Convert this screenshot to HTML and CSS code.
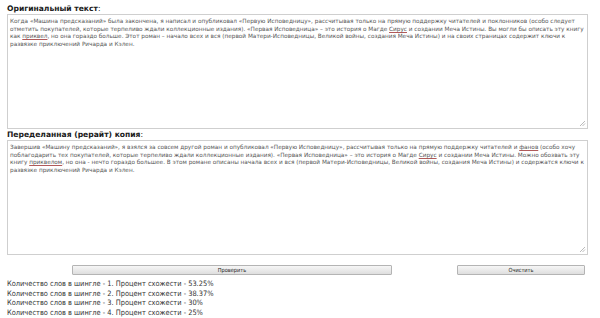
FILE: index.html
```html
<!DOCTYPE html>
<html lang="ru">
<head>
<meta charset="utf-8">
<link rel="stylesheet" href="styles.css">
</head>
<body>
<div class="page">
  <div class="label">Оригинальный текст<span class="colon">:</span></div>
  <div class="box box-orig">
    <div class="line">Когда «Машина предсказаний» была закончена, я написал и опубликовал «Первую Исповедницу», рассчитывая только на прямую поддержку читателей и поклонников (особо следует</div>
    <div class="line">отметить покупателей, которые терпеливо ждали коллекционные издания). «Первая Исповедница» – это история о Магде <span class="sp">Сирус</span> и создании Меча Истины. Вы могли бы описать эту книгу</div>
    <div class="line">как <span class="sp">приквел</span>, но она гораздо больше. Этот роман – начало всех и вся (первой Матери-Исповедницы, Великой войны, создания Меча Истины) и на своих страницах содержит ключи к</div>
    <div class="line">развязке приключений Ричарда и Кэлен.</div>
    <svg class="grip" width="7" height="7" viewBox="0 0 7 7"><path d="M6 1L1 6M6 3.5L3.5 6" stroke="#aaa" stroke-width="0.8"/></svg>
  </div>
  <div class="label label2">Переделанная (рерайт) копия<span class="colon">:</span></div>
  <div class="box box-copy">
    <div class="line">Завершив «Машину предсказаний», я взялся за совсем другой роман и опубликовал «Первую Исповедницу», рассчитывая только на прямую поддержку читателей и <span class="sp">фанов</span> (особо хочу</div>
    <div class="line">поблагодарить тех покупателей, которые терпеливо ждали коллекционные издания). «Первая Исповедница» – это история о Магде <span class="sp">Сирус</span> и создании Меча Истины. Можно обозвать эту</div>
    <div class="line">книгу <span class="sp">приквелом</span>, но она - нечто гораздо большее. В этом романе описаны начала всех и вся (первой Матери-Исповедницы, Великой войны, создания Меча Истины) и содержатся ключи к</div>
    <div class="line">развязке приключений Ричарда и Кэлен.</div>
    <svg class="grip" width="7" height="7" viewBox="0 0 7 7"><path d="M6 1L1 6M6 3.5L3.5 6" stroke="#aaa" stroke-width="0.8"/></svg>
  </div>
  <div class="buttons">
    <button class="btn btn-check" type="button">Проверить</button>
    <button class="btn btn-clear" type="button">Очистить</button>
  </div>
  <div class="results">
    <div>Количество слов в шингле - 1. Процент схожести - 53.25%</div>
    <div>Количество слов в шингле - 2. Процент схожести - 38.37%</div>
    <div>Количество слов в шингле - 3. Процент схожести - 30%</div>
    <div>Количество слов в шингле - 4. Процент схожести - 25%</div>
  </div>
</div>
</body>
</html>
```
FILE: styles.css
```css
html, body {
  margin: 0;
  padding: 0;
  background: #ffffff;
}
.page {
  padding: 4px 12px 0 7px;
  font-family: "DejaVu Sans", Verdana, sans-serif;
  color: #333;
}
.label {
  font-weight: bold;
  font-size: 7.6px;
  line-height: 10px;
  color: #1a1a1a;
}
.colon {
  font-weight: normal;
}
.label2 {
  margin-top: 1px;
}
.box {
  position: relative;
  border: 1px solid #cfcfcf;
  background: #fff;
  padding: 3px 2px;
  box-sizing: border-box;
  font-size: 5.74px;
  line-height: 7.7px;
  color: #555;
  white-space: nowrap;
  overflow: hidden;
}
.box-orig {
  height: 115px;
}
.box-copy {
  height: 115px;
}
.sp {
  text-decoration: underline solid #b05a5a;
  text-decoration-thickness: 0.6px;
  text-underline-offset: 0.5px;
}
.grip {
  position: absolute;
  right: 1px;
  bottom: 1px;
}
.buttons {
  display: flex;
  margin-top: 10px;
  padding-left: 65px;
}
.btn {
  height: 10px;
  padding: 0;
  border: 1px solid #b4b4b4;
  border-radius: 1px;
  background: linear-gradient(#f6f6f6, #dedede);
  font-family: "DejaVu Sans Condensed", "DejaVu Sans", sans-serif;
  font-size: 5.6px;
  line-height: 8px;
  color: #222;
}
.btn-check {
  width: 320px;
}
.btn-clear {
  width: 128px;
  margin-left: 65px;
}
.results {
  margin-top: 4px;
  font-family: "DejaVu Sans Condensed", "DejaVu Sans", sans-serif;
  font-size: 7.4px;
  line-height: 9.7px;
  color: #333;
}
```
